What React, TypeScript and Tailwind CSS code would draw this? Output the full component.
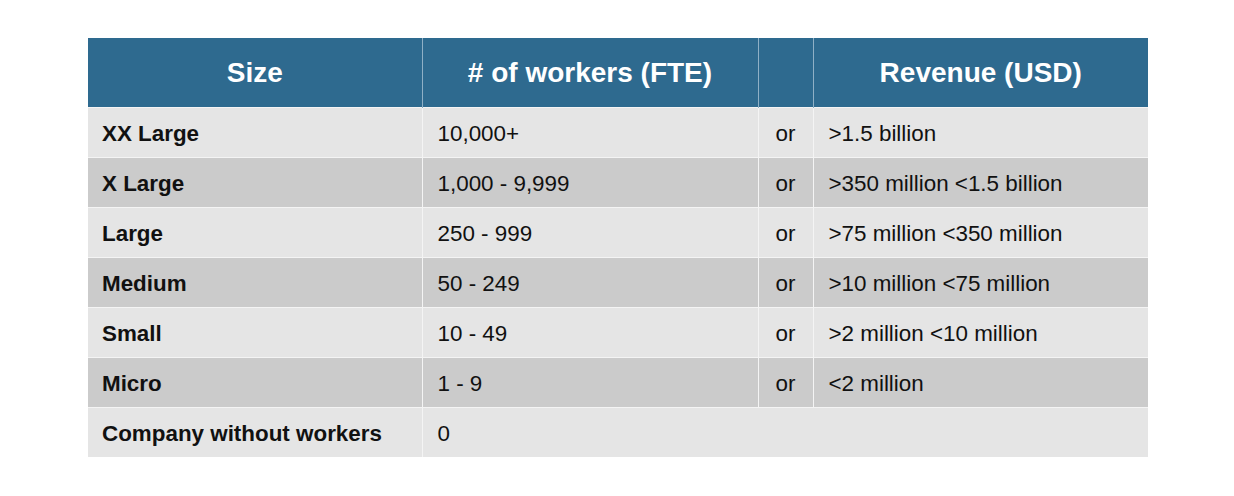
const rows = [
  { size: "XX Large", workers: "10,000+", revenue: ">1.5 billion" },
  { size: "X Large", workers: "1,000 - 9,999", revenue: ">350 million <1.5 billion" },
  { size: "Large", workers: "250 - 999", revenue: ">75 million <350 million" },
  { size: "Medium", workers: "50 - 249", revenue: ">10 million <75 million" },
  { size: "Small", workers: "10 - 49", revenue: ">2 million <10 million" },
  { size: "Micro", workers: "1 - 9", revenue: "<2 million" },
];

export default function App() {
  return (
    <div className="w-[1234px] h-[496px] bg-white pt-[38px] pl-[88px] font-['Liberation_Sans',Arial,sans-serif]">
      <table className="w-[1060px] border-collapse text-[22.4px] leading-none text-[#111]">
        <thead>
          <tr className="h-[69px] bg-[#2e6a8f] text-white text-[28px] font-bold">
            <th className="w-[334px] pt-[2px] border-r border-[#8fb0c6] text-center">Size</th>
            <th className="w-[336px] pt-[2px] border-r border-[#8fb0c6] text-center"># of workers (FTE)</th>
            <th className="w-[55px] border-r border-[#8fb0c6]"></th>
            <th className="pt-[2px] text-center">Revenue (USD)</th>
          </tr>
        </thead>
        <tbody>
          {rows.map((r, i) => (
            <tr
              key={r.size}
              className={`h-[50px] border-t border-[#f4f4f4] ${i % 2 === 0 ? "bg-[#e5e5e5]" : "bg-[#cbcbcb]"}`}
            >
              <td className="pl-[14px] pt-[4px] font-bold border-r border-[#f4f4f4]">{r.size}</td>
              <td className="pl-[15px] pt-[4px] border-r border-[#f4f4f4]">{r.workers}</td>
              <td className="text-center pt-[4px] border-r border-[#f4f4f4]">or</td>
              <td className="pl-[15px] pt-[4px]">{r.revenue}</td>
            </tr>
          ))}
          <tr className="h-[50px] border-t border-[#f4f4f4] bg-[#e5e5e5]">
            <td className="pl-[14px] pt-[4px] font-bold border-r border-[#f4f4f4]">Company without workers</td>
            <td colSpan={3} className="pl-[15px] pt-[4px]">0</td>
          </tr>
        </tbody>
      </table>
    </div>
  );
}
